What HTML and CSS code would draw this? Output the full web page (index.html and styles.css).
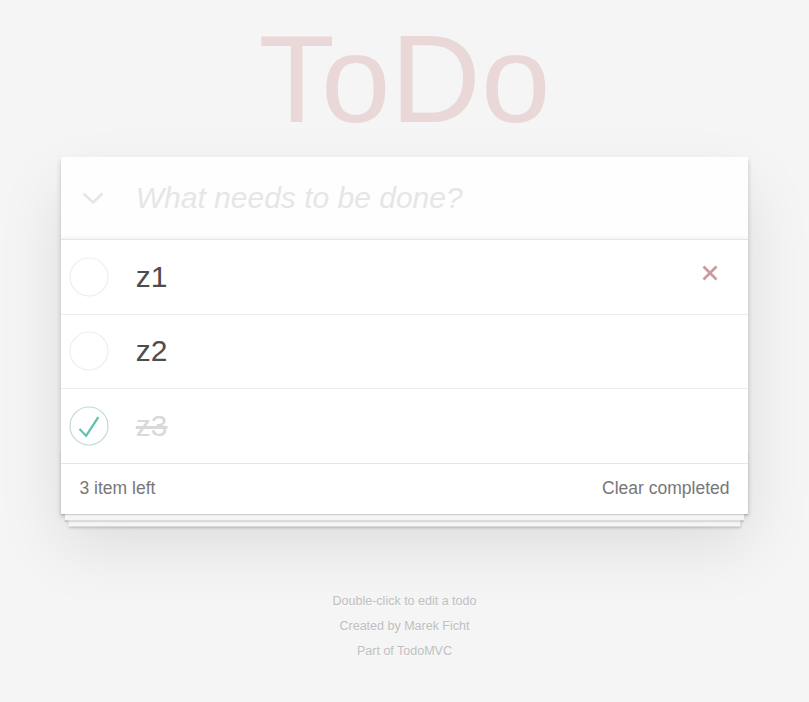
FILE: index.html
```html
<!DOCTYPE html>
<html lang="en">
<head>
<meta charset="utf-8">
<title>ToDo</title>
<link rel="stylesheet" href="styles.css">
</head>
<body>
<div class="page">
  <h1 class="title">ToDo</h1>
  <section class="todoapp">
    <header class="header">
      <span class="toggle-all">
        <svg width="22" height="12" viewBox="0 0 22 12"><polyline points="1.5,1.5 11,10.5 20.5,1.5" fill="none" stroke="#e6e6e6" stroke-width="2.6"/></svg>
      </span>
      <input class="new-todo" type="text" placeholder="What needs to be done?">
    </header>
    <section class="main">
      <ul class="todo-list">
        <li class="todo">
          <svg class="toggle" width="40" height="40" viewBox="-2.63 -2.63 105.26 105.26"><circle cx="50" cy="50" r="50" fill="none" stroke="#ededed" stroke-width="3"/></svg>
          <label class="todo-label">z1</label>
          <svg class="destroy" width="16" height="16" viewBox="0 0 16 16"><path d="M1.5 1.5L14.5 14.5M14.5 1.5L1.5 14.5" stroke="#cc9a9a" stroke-width="2.8" fill="none"/></svg>
        </li>
        <li class="todo">
          <svg class="toggle" width="40" height="40" viewBox="-2.63 -2.63 105.26 105.26"><circle cx="50" cy="50" r="50" fill="none" stroke="#ededed" stroke-width="3"/></svg>
          <label class="todo-label">z2</label>
        </li>
        <li class="todo completed">
          <svg class="toggle" width="40" height="40" viewBox="-2.63 -2.63 105.26 105.26"><circle cx="50" cy="50" r="50" fill="none" stroke="#bddad5" stroke-width="3"/><path fill="#5dc2af" d="M72 25L42 71 27 56l-4 4 20 20 34-52z"/></svg>
          <label class="todo-label">z3</label>
        </li>
      </ul>
    </section>
    <footer class="footer">
      <span class="todo-count">3 item left</span>
      <span class="clear-completed">Clear completed</span>
    </footer>
  </section>
  <footer class="info">
    <p>Double-click to edit a todo</p>
    <p>Created by Marek Ficht</p>
    <p>Part of TodoMVC</p>
  </footer>
</div>
</body>
</html>
```
FILE: styles.css
```css
html, body {
  margin: 0;
  padding: 0;
}

body {
  font-family: "Liberation Sans", Arial, sans-serif;
  font-size: 17.5px;
  line-height: 24.5px;
  background: #f5f5f5;
  color: #4d4d4d;
  font-weight: 300;
}

.page {
  max-width: 687.5px;
  margin: 0 auto;
}

.title {
  margin: 0;
  padding-top: 2px;
  height: 155px;
  line-height: 153px;
  font-size: 125px;
  font-weight: 400;
  text-align: center;
  color: rgba(175, 47, 47, 0.15);
}

.todoapp {
  background: #fff;
  margin: 0 0 50px 0;
  box-shadow: 0 2.5px 5px 0 rgba(0, 0, 0, 0.2),
              0 31.25px 62.5px 0 rgba(0, 0, 0, 0.1);
}

.header {
  display: flex;
  align-items: center;
  height: 82px;
  background: rgba(0, 0, 0, 0.003);
  box-shadow: inset 0 -2.5px 1.25px rgba(0, 0, 0, 0.03);
}

.toggle-all {
  width: 75px;
  flex-shrink: 0;
  box-sizing: border-box;
  padding-left: 21px;
  display: flex;
  align-items: center;
}

.new-todo {
  flex: 1;
  min-width: 0;
  height: 100%;
  border: none;
  outline: none;
  background: transparent;
  padding: 0 20px 0 0;
  margin: 0;
  font-family: inherit;
  font-size: 30px;
  line-height: 42px;
  font-weight: 300;
  color: #4d4d4d;
}

.new-todo::placeholder {
  font-style: italic;
  font-weight: 300;
  color: #e6e6e6;
}

.main {
  position: relative;
  z-index: 2;
  border-top: 1px solid #e6e6e6;
}

.todo-list {
  margin: 0;
  padding: 0;
  list-style: none;
}

.todo {
  display: flex;
  align-items: center;
  font-size: 30px;
  border-bottom: 1px solid #ededed;
}

.todo:last-child {
  border-bottom: none;
}

.toggle {
  flex-shrink: 0;
  margin: 0 26.5px 0 8.5px;
}

.todo-label {
  flex: 1;
  display: block;
  padding: 18.75px 18.75px 18.75px 0;
  line-height: 36px;
  color: #4d4d4d;
  word-break: break-all;
}

.completed .todo-label {
  color: #d9d9d9;
  text-decoration: line-through;
}

.destroy {
  flex-shrink: 0;
  margin: 0 30px 8.5px 0;
}

.footer {
  position: relative;
  display: flex;
  justify-content: space-between;
  color: #777;
  padding: 12.5px 18.75px;
  height: 25px;
  line-height: 25px;
  border-top: 1px solid #e6e6e6;
}

.footer::before {
  content: '';
  position: absolute;
  right: 0;
  bottom: 0;
  left: 0;
  height: 62.5px;
  overflow: hidden;
  box-shadow: 0 1.25px 1.25px rgba(0, 0, 0, 0.2),
              0 10px 0 -3.75px #f6f6f6,
              0 11.25px 1.25px -3.75px rgba(0, 0, 0, 0.2),
              0 20px 0 -7.5px #f6f6f6,
              0 21.25px 2.5px -7.5px rgba(0, 0, 0, 0.2);
}

.todo-count,
.clear-completed {
  position: relative;
}

.info {
  margin: 81.25px auto 0;
  color: #bfbfbf;
  font-size: 12.5px;
  text-shadow: 0 1.25px 0 rgba(255, 255, 255, 0.5);
  text-align: center;
}

.info p {
  line-height: 1;
  margin: 12.5px 0;
}
```
